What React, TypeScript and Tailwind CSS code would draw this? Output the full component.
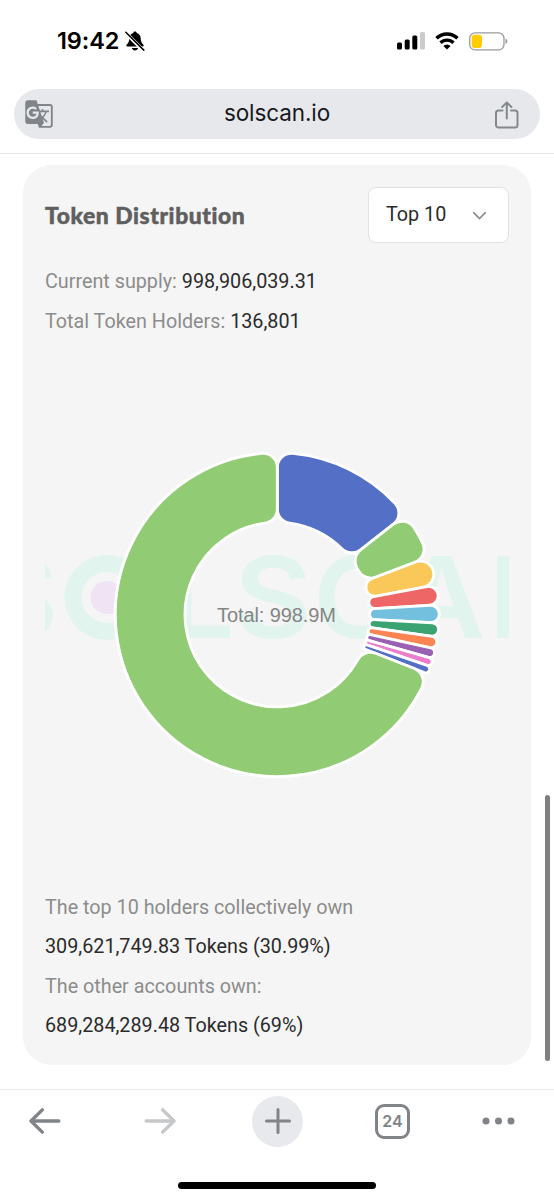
import { MdGTranslate } from "react-icons/md";

interface Slice {
  color: string;
  from: number;
  to: number;
}

// angles in degrees, clockwise from 12 o'clock
const slices: Slice[] = [
  { color: "#5470c6", from: 0, to: 52.1 },
  { color: "#91cc75", from: 52.1, to: 69.2 },
  { color: "#fac858", from: 69.2, to: 79.4 },
  { color: "#ee6666", from: 79.4, to: 86.5 },
  { color: "#73c0de", from: 86.5, to: 93 },
  { color: "#3ba272", from: 93, to: 98 },
  { color: "#fc8452", from: 98, to: 102.2 },
  { color: "#9a60b4", from: 102.2, to: 105.8 },
  { color: "#ea7ccc", from: 105.8, to: 108.7 },
  { color: "#5470c6", from: 108.7, to: 111.5 },
  { color: "#91cc75", from: 111.5, to: 360 },
];

const CX = 232.3;
const CY = 174.6;
const OUTER = 162;
const INNER = 92.3;
const CORNER = 14.2;

function point(r: number, angle: number) {
  return `${(CX + r * Math.sin(angle)).toFixed(2)} ${(CY - r * Math.cos(angle)).toFixed(2)}`;
}

function slicePath({ from, to }: Slice) {
  const a = (from * Math.PI) / 180;
  const b = (to * Math.PI) / 180;
  let oc = CORNER;
  let ic = CORNER;
  if (b - a < Math.PI) {
    // corners of a narrow slice shrink until they touch each other
    const k = 1 / Math.sin((b - a) / 2);
    oc = Math.min(oc, OUTER / (k + 1));
    ic = Math.min(ic, INNER / (k - 1));
  }
  const oa = Math.asin(oc / (OUTER - oc));
  const ia = Math.asin(ic / (INNER + ic));
  const oe = Math.sqrt((OUTER - oc) ** 2 - oc ** 2);
  const ie = Math.sqrt((INNER + ic) ** 2 - ic ** 2);
  const outerLarge = b - a - 2 * oa > Math.PI ? 1 : 0;
  const innerLarge = b - a - 2 * ia > Math.PI ? 1 : 0;
  return [
    `M${point(oe, a)}`,
    `A${oc} ${oc} 0 0 1 ${point(OUTER, a + oa)}`,
    `A${OUTER} ${OUTER} 0 ${outerLarge} 1 ${point(OUTER, b - oa)}`,
    `A${oc} ${oc} 0 0 1 ${point(oe, b)}`,
    `L${point(ie, b)}`,
    `A${ic} ${ic} 0 0 1 ${point(INNER, b - ia)}`,
    `A${INNER} ${INNER} 0 ${innerLarge} 0 ${point(INNER, a + ia)}`,
    `A${ic} ${ic} 0 0 1 ${point(ie, a)}`,
    "Z",
  ].join(" ");
}

const watermark = [
  { char: "S", x: -63, width: 76 },
  { char: "L", x: 122, width: 68 },
  { char: "S", x: 189, width: 78 },
  { char: "C", x: 268, width: 88 },
  { char: "A", x: 354, width: 86 },
  { char: "N", x: 443, width: 96 },
];

function StatusBar() {
  return (
    <div className="flex h-[89px] items-start justify-between pl-[57px] pr-[46px] pt-[25px]">
      <div className="flex h-8 items-center gap-[6px]">
        <span className="text-[23.5px] font-semibold leading-8 tracking-[-0.1px] text-black">19:42</span>
        <svg width="20" height="20" viewBox="0 0 20 20">
          <path
            d="M10 0.6c-.9 0-1.5.5-1.7 1.3C5.800 2.600 4.400 4.600 4.300 7c-.1 3.300-.7 4.800-2.500 6.600-.8.8-.6 2 .6 2h15.200c1.200 0 1.400-1.200.6-2-1.800-1.800-2.400-3.300-2.500-6.600-.1-2.400-1.500-4.400-4-5.100C11.500 1.100 10.900.6 10 .6ZM6.900 17h6.200c-.4 1.500-1.600 2.400-3.100 2.400S7.300 18.500 6.900 17Z"
            fill="#000"
          />
          <path d="M0 1.200 18.400 19.600" stroke="#fff" strokeWidth="3.600" />
          <path d="M.8 1.300 18.800 19.100" stroke="#000" strokeWidth="1.500" strokeLinecap="round" />
        </svg>
      </div>
      <div className="flex h-8 items-center">
        <svg width="28" height="18" viewBox="0 0 28 18">
          <rect x="0" y="10.500" width="5" height="7" rx="1.500" />
          <rect x="7.700" y="7.500" width="5" height="10" rx="1.500" />
          <rect x="15.300" y="3.500" width="5" height="14" rx="1.500" />
          <rect x="23" y="0" width="5" height="17.500" rx="1.500" fill="#cbcbcb" />
        </svg>
        <svg className="ml-[10px]" width="24" height="18" viewBox="0 0 24 18">
          <path d="M1.500 6.300a15 15 0 0 1 21 0" fill="none" stroke="#000" strokeWidth="3.500" />
          <path d="M5.500 10.700a9.300 9.300 0 0 1 13 0" fill="none" stroke="#000" strokeWidth="3.300" />
          <path d="M12 17.500 8.400 14a5 5 0 0 1 7.200 0Z" />
        </svg>
        <svg className="ml-[10px]" width="39" height="19" viewBox="0 0 39 19">
          <rect x=".7" y=".9" width="34.300" height="17" rx="5.300" fill="#fff" stroke="#9b9b9b" strokeWidth="1.300" />
          <rect x="2.700" y="2.800" width="10.300" height="13.200" rx="3.300" fill="#ffcc00" />
          <path d="M36.500 6.500v5.600q1.900-.8 1.900-2.800t-1.900-2.800Z" fill="#9b9b9b" />
        </svg>
      </div>
    </div>
  );
}

function AddressBar() {
  return (
    <div className="mx-[14px] flex h-[50px] items-center justify-between rounded-full bg-[#e6e8ec] pl-[10px] pr-[21px]">
      <MdGTranslate size={30} color="#808589" />
      <span className="ml-[5px] mt-[-2px] text-[22.5px] leading-none tracking-[-0.1px] text-[#18191c]">solscan.io</span>
      <svg className="mt-[2px]" width="24" height="28" viewBox="0 0 24 28" fill="none" stroke="#85898c" strokeWidth="2" strokeLinecap="round" strokeLinejoin="round">
        <path d="M7.500 9.500H3.500a2.500 2.500 0 0 0-2.500 2.500v12a2.500 2.500 0 0 0 2.500 2.500h16.500a2.500 2.500 0 0 0 2.500-2.500V12a2.500 2.500 0 0 0-2.500-2.500h-4" />
        <path d="M11.800 17.500V1.500M7.200 6l4.600-4.600L16.400 6" />
      </svg>
    </div>
  );
}

function DonutChart() {
  return (
    <svg className="block" width="464" height="350" viewBox="0 0 464 350">
      <g fill="#e2f4ee" fontFamily="Inter, 'Liberation Sans', sans-serif" fontSize="113" fontWeight="600">
        {watermark.map((w) => (
          <text key={w.x} x={w.x} y="198" textLength={w.width} lengthAdjust="spacingAndGlyphs">
            {w.char}
          </text>
        ))}
      </g>
      <circle cx="62" cy="157.500" r="34" fill="none" stroke="#e2f4ee" strokeWidth="17" />
      <circle cx="62" cy="157.500" r="16.500" fill="#f0e4f4" />
      <g stroke="#fff" strokeWidth="2.840" strokeLinejoin="bevel">
        {slices.map((s) => (
          <path key={s.from} d={slicePath(s)} fill={s.color} />
        ))}
      </g>
      <text
        x="231.500"
        y="182"
        textAnchor="middle"
        textLength="119"
        fill="#858585"
        fontSize="20"
        fontFamily="'Liberation Sans', Arial, sans-serif"
      >
        Total: 998.9M
      </text>
    </svg>
  );
}

function TokenCard() {
  return (
    <section className="ml-[23px] mt-[11px] h-[900px] w-[508px] rounded-[28px] bg-[#f5f5f5] px-[22px] pt-[22px] font-['Roboto',sans-serif] text-[19.75px] text-[#2b2b2b]">
      <div className="flex items-center justify-between">
        <h2 className="font-['Lato',sans-serif] text-[22.8px] font-black tracking-[0.6px] text-[#5f5f5f] [-webkit-text-stroke:0.5px_#5f5f5f]">
          Token Distribution
        </h2>
        <button className="flex h-[56px] w-[141px] items-center justify-between rounded-lg border border-[#e2e2e2] bg-white pl-[17px] pr-[21px]">
          <span>Top 10</span>
          <svg width="15" height="9" viewBox="0 0 15 9" fill="none" stroke="#8c8c8c" strokeWidth="1.700">
            <path d="M1.200 1.200 7.500 7.500l6.300-6.300" />
          </svg>
        </button>
      </div>
      <div className="mt-[19px] leading-[39.5px] text-[#8c8c8c]">
        <p>
          Current supply: <span className="text-[#2b2b2b]">998,906,039.31</span>
        </p>
        <p>
          Total Token Holders: <span className="text-[#2b2b2b]">136,801</span>
        </p>
      </div>
      <div className="mt-[99px]">
        <DonutChart />
      </div>
      <div className="mt-[98px] leading-[39.4px] text-[#8c8c8c]">
        <p>The top 10 holders collectively own</p>
        <p className="text-[#2b2b2b]">309,621,749.83 Tokens (30.99%)</p>
        <p>The other accounts own:</p>
        <p className="text-[#2b2b2b]">689,284,289.48 Tokens (69%)</p>
      </div>
    </section>
  );
}

function Arrow({ className }: { className: string }) {
  return (
    <svg className={className} width="32" height="26" viewBox="0 0 32 26" fill="none" stroke="currentColor" strokeWidth="3.400" strokeLinecap="round" strokeLinejoin="round">
      <path d="M29.800 13H2M13.300 1.900 2 13l11.300 11.100" />
    </svg>
  );
}

function Toolbar() {
  return (
    <nav className="h-[111px] border-t border-[#e8eaed]">
      <div className="flex h-[62px] items-center justify-between pl-[29px] pr-[39px]">
        <Arrow className="text-[#808488]" />
        <Arrow className="ml-[8px] rotate-180 text-[#c6c7c9]" />
        <div className="ml-[1px] flex h-[51px] w-[51px] items-center justify-center rounded-full bg-[#e8e9ed]">
          <svg width="26" height="26" viewBox="0 0 26 26" stroke="#808488" strokeWidth="3" strokeLinecap="round">
            <path d="M13 1.500v23M1.500 13h23" />
          </svg>
        </div>
        <div className="ml-[-3px] mr-[-3px] flex h-[35px] w-[35px] items-center justify-center rounded-[9px] border-[3px] border-[#808488] text-[16px] font-semibold leading-none text-[#808488]">
          24
        </div>
        <svg width="33" height="8" viewBox="0 0 33 8" fill="#808488">
          <circle cx="4" cy="4" r="3.500" />
          <circle cx="16.500" cy="4" r="3.500" />
          <circle cx="29" cy="4" r="3.500" />
        </svg>
      </div>
      <div className="mx-auto mt-[30px] h-[7px] w-[198px] rounded-full bg-black" />
    </nav>
  );
}

export default function App() {
  return (
    <div className="relative flex h-[1200px] w-[554px] flex-col overflow-hidden bg-white font-['Inter',sans-serif]">
      <header className="h-[154px] border-b border-[#e6e7e9]">
        <StatusBar />
        <AddressBar />
      </header>
      <main className="h-[935px]">
        <TokenCard />
      </main>
      <Toolbar />
      <div className="absolute right-[4px] top-[795px] h-[266px] w-[5px] rounded-full bg-[#7f7f7f]" />
    </div>
  );
}
